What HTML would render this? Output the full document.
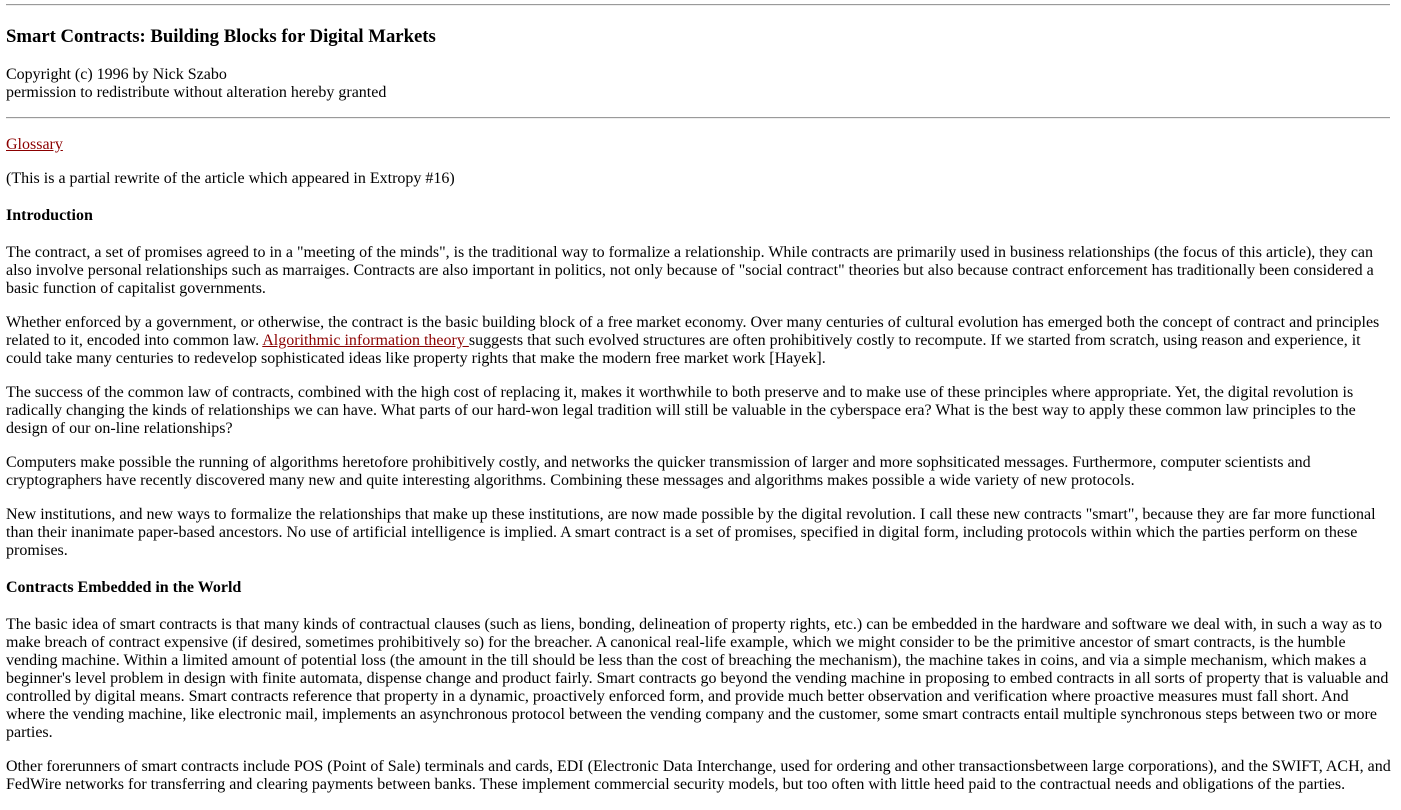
<!DOCTYPE html>
<html><head><meta charset="utf-8"><style>
body{margin:0 11px 0 6px;font-family:"Liberation Serif",serif;font-size:16px;line-height:18px;color:#000;background:#fff}
hr{border:0;border-top:1px solid #9a9a9a;border-bottom:1px solid #eee;height:0;margin:4px 0 16px}
hr.b{margin:14px 0 17px}
h3{font-size:18.72px;line-height:22px;margin:20px 0 18px}
p{margin:16px 0}
p.c{margin-bottom:15px}
p.h{font-weight:bold;margin:19px 0}
a{color:#8b0000}
</style></head><body>
<hr>
<h3>Smart Contracts: Building Blocks for Digital Markets</h3>
<p class="c">Copyright (c) 1996 by Nick Szabo<br>permission to redistribute without alteration hereby granted</p>
<hr class="b">
<p><a href="#">Glossary</a></p>
<p>(This is a partial rewrite of the article which appeared in Extropy #16)</p>
<p class="h">Introduction</p>
<p>The contract, a set of promises agreed to in a "meeting of the minds", is the traditional way to formalize a relationship. While contracts are primarily used in business relationships (the focus of this article), they can also involve personal relationships such as marraiges. Contracts are also important in politics, not only because of "social contract" theories but also because contract enforcement has traditionally been considered a basic function of capitalist governments.</p>
<p>Whether enforced by a government, or otherwise, the contract is the basic building block of a free market economy. Over many centuries of cultural evolution has emerged both the concept of contract and principles related to it, encoded into common law. <a href="#">Algorithmic information theory </a>suggests that such evolved structures are often prohibitively costly to recompute. If we started from scratch, using reason and experience, it could take many centuries to redevelop sophisticated ideas like property rights that make the modern free market work [Hayek].</p>
<p>The success of the common law of contracts, combined with the high cost of replacing it, makes it worthwhile to both preserve and to make use of these principles where appropriate. Yet, the digital revolution is radically changing the kinds of relationships we can have. What parts of our hard-won legal tradition will still be valuable in the cyberspace era? What is the best way to apply these common law principles to the design of our on-line relationships?</p>
<p>Computers make possible the running of algorithms heretofore prohibitively costly, and networks the quicker transmission of larger and more sophsiticated messages. Furthermore, computer scientists and cryptographers have recently discovered many new and quite interesting algorithms. Combining these messages and algorithms makes possible a wide variety of new protocols.</p>
<p>New institutions, and new ways to formalize the relationships that make up these institutions, are now made possible by the digital revolution. I call these new contracts "smart", because they are far more functional than their inanimate paper-based ancestors. No use of artificial intelligence is implied. A smart contract is a set of promises, specified in digital form, including protocols within which the parties perform on these promises.</p>
<p class="h">Contracts Embedded in the World</p>
<p>The basic idea of smart contracts is that many kinds of contractual clauses (such as liens, bonding, delineation of property rights, etc.) can be embedded in the hardware and software we deal with, in such a way as to make breach of contract expensive (if desired, sometimes prohibitively so) for the breacher. A canonical real-life example, which we might consider to be the primitive ancestor of smart contracts, is the humble vending machine. Within a limited amount of potential loss (the amount in the till should be less than the cost of breaching the mechanism), the machine takes in coins, and via a simple mechanism, which makes a beginner's level problem in design with finite automata, dispense change and product fairly. Smart contracts go beyond the vending machine in proposing to embed contracts in all sorts of property that is valuable and controlled by digital means. Smart contracts reference that property in a dynamic, proactively enforced form, and provide much better observation and verification where proactive measures must fall short. And<br>where the vending machine, like electronic mail, implements an asynchronous protocol between the vending company and the customer, some smart contracts entail multiple synchronous steps between two or more<br>parties.</p>
<p style="margin-right:-10px">Other forerunners of smart contracts include POS (Point of Sale) terminals and cards, EDI (Electronic Data Interchange, used for ordering and other transactionsbetween large corporations), and the SWIFT, ACH, and<br>FedWire networks for transferring and clearing payments between banks. These implement commercial security models, but too often with little heed paid to the contractual needs and obligations of the parties.</p>
</body></html>
